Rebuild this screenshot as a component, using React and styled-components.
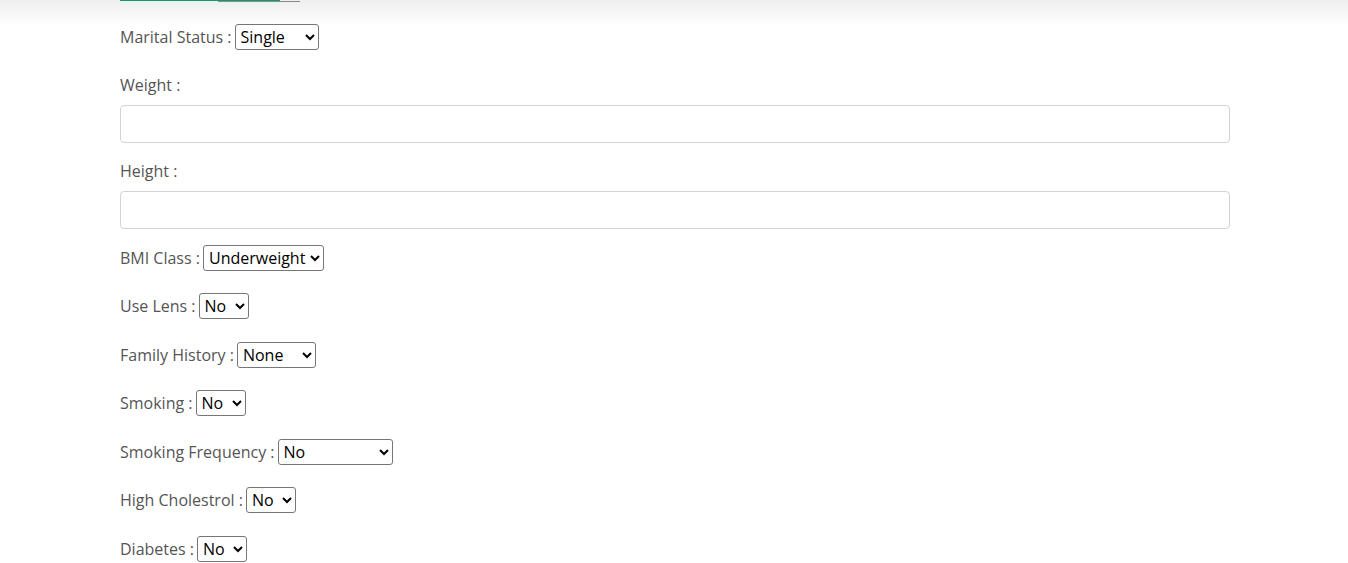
import styled, { createGlobalStyle } from "styled-components";

const GlobalStyle = createGlobalStyle`
  body {
    margin: 0;
    background: #fff;
    font-family: "Open Sans", "Noto Sans", sans-serif;
  }
`;

const Page = styled.main`
  min-height: 563px;
  background: linear-gradient(#eeeeee, #ffffff 26px) no-repeat top / 100% 26px;
`;

const CutOff = styled.div`
  position: relative;
  margin-left: 120px;
  width: 180px;
  height: 2px;

  .green {
    position: absolute;
    left: 0;
    top: 0;
    width: 160px;
    height: 1px;
    background: #0b9b6c;
  }
  .grey {
    position: absolute;
    left: 98px;
    top: 1px;
    width: 82px;
    height: 1px;
    background: #8a8a8a;
  }
`;

const Form = styled.form`
  width: 1110px;
  margin-left: 120px;
  padding-top: 22px;
`;

const SelectRow = styled.div`
  display: flex;
  align-items: center;
  gap: 3px;
  height: 26px;
  margin-bottom: 22.5px;
  color: #555;
  font-size: 16px;
`;

const TextField = styled.div`
  margin-bottom: 16px;

  label {
    display: block;
    color: #555;
    font-size: 16px;
    line-height: 24px;
    margin-bottom: 8px;
  }
`;

const Input = styled.input`
  display: block;
  box-sizing: border-box;
  width: 100%;
  height: 38px;
  border: 1px solid #ced4da;
  border-radius: 4px;
  background: #fff;
  font: inherit;
  padding: 6px 12px;
`;

const Select = styled.select`
  box-sizing: border-box;
  width: ${(p) => p.$w}px;
  height: 26px;
  font-family: "Open Sans", "Noto Sans", sans-serif;
  font-size: 16px;
  color: #000;
  padding: 0 1px;
  border: 1px solid #767676;
  border-radius: 3px;
  background: #fff;
`;

const selects = [
  { label: "BMI Class", w: 121, options: ["Underweight", "Normal", "Overweight", "Obese"] },
  { label: "Use Lens", w: 50, options: ["No", "Yes"] },
  { label: "Family History", w: 79, options: ["None", "Father", "Mother", "Both"] },
  { label: "Smoking", w: 50, options: ["No", "Yes"] },
  { label: "Smoking Frequency", w: 115, options: ["No", "Occasionally", "Daily"] },
  { label: "High Cholestrol", w: 50, options: ["No", "Yes"] },
  { label: "Diabetes", w: 50, options: ["No", "Yes"] },
];

function App() {
  return (
    <Page>
      <GlobalStyle />
      <CutOff>
        <span className="green" />
        <span className="grey" />
      </CutOff>
      <Form>
        <SelectRow>
          <span>Marital Status :</span>
          <Select $w={84} defaultValue="Single">
            <option>Single</option>
            <option>Married</option>
            <option>Divorced</option>
          </Select>
        </SelectRow>
        <TextField>
          <label>Weight :</label>
          <Input type="text" />
        </TextField>
        <TextField>
          <label>Height :</label>
          <Input type="text" />
        </TextField>
        {selects.map((s) => (
          <SelectRow key={s.label}>
            <span>{s.label} :</span>
            <Select $w={s.w}>
              {s.options.map((o) => (
                <option key={o}>{o}</option>
              ))}
            </Select>
          </SelectRow>
        ))}
      </Form>
    </Page>
  );
}

export default App;
